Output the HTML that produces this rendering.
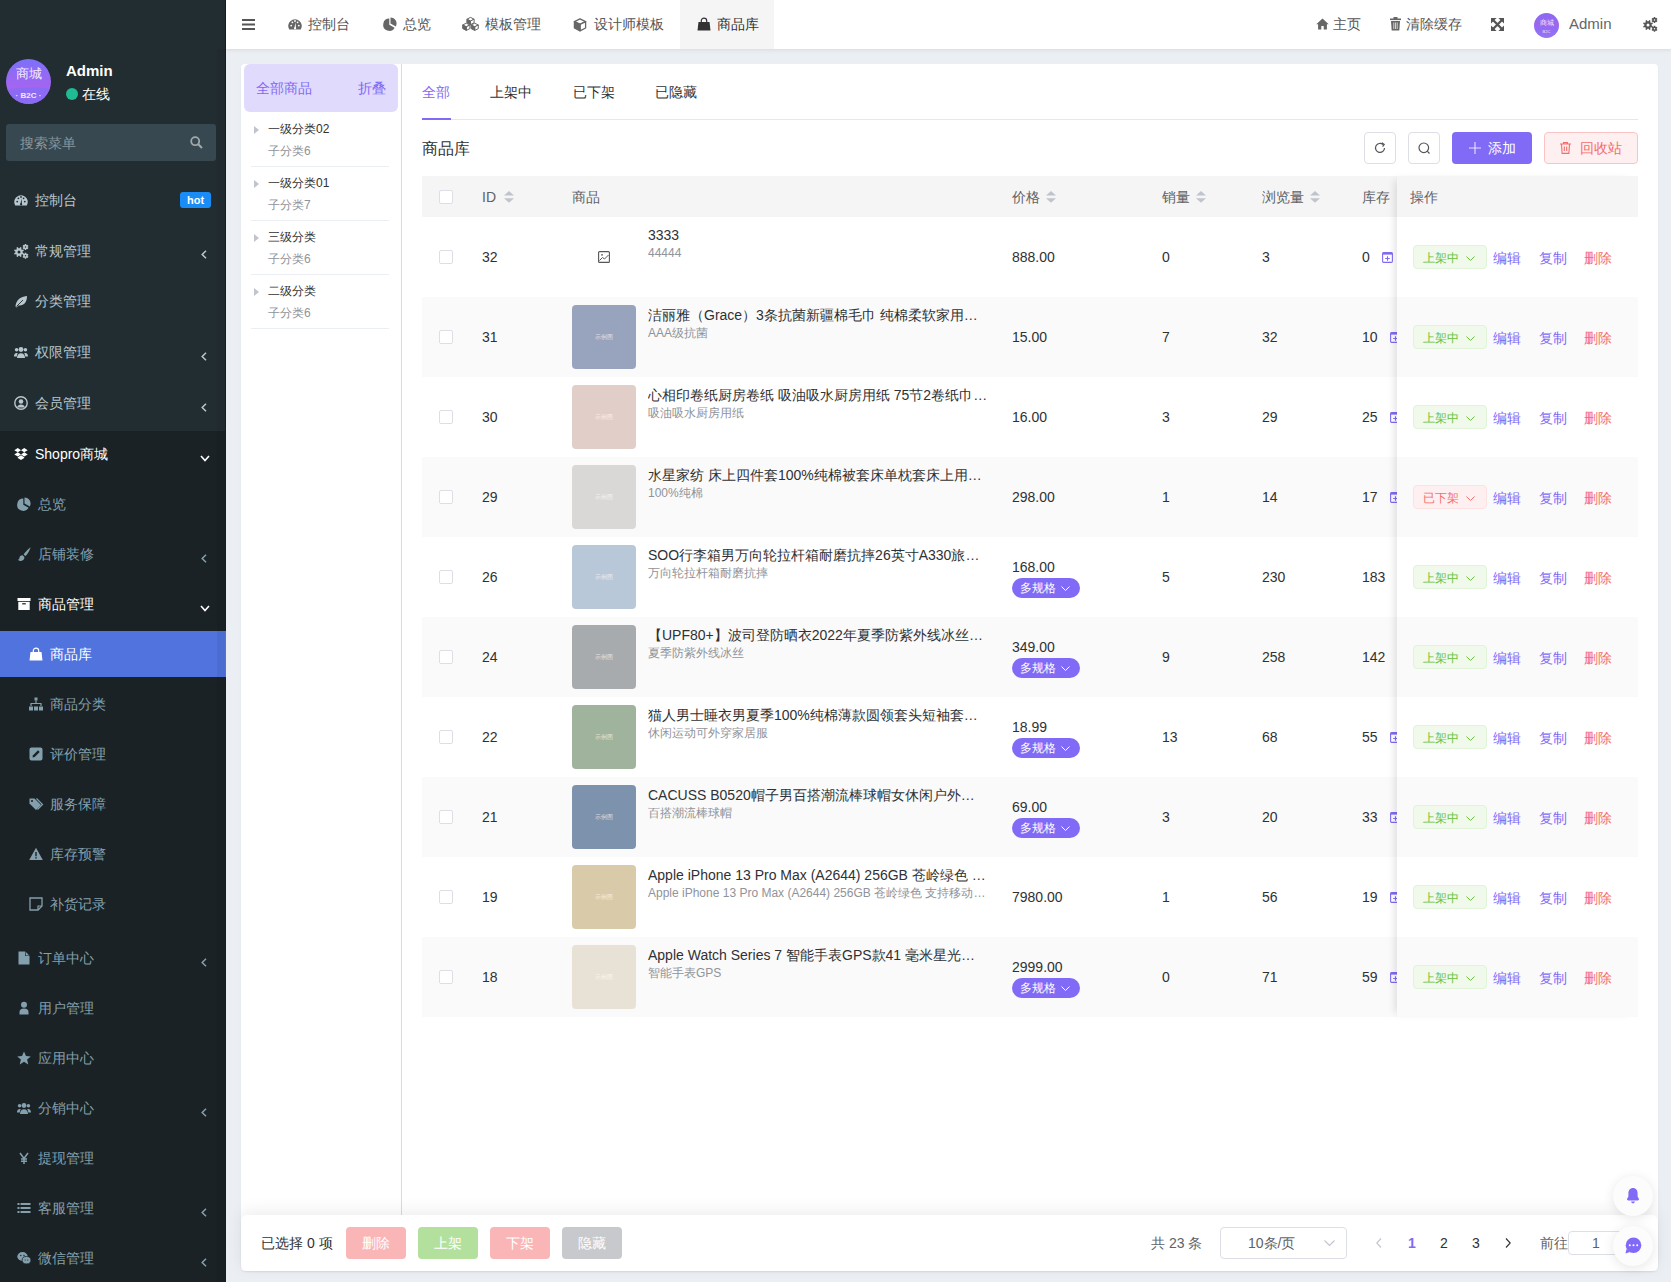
<!DOCTYPE html><html><head><meta charset="utf-8"><style>
*{box-sizing:border-box;margin:0;padding:0}
html,body{width:1671px;height:1282px;overflow:hidden}
body{background:#ebeef3;font-family:"Liberation Sans",sans-serif;position:relative;font-size:14px;color:#303133}
.a{position:absolute;white-space:nowrap}
svg.a{display:block;overflow:visible}
.ell{overflow:hidden;text-overflow:ellipsis}
</style></head><body>
<div class="a" style="left:0px;top:0px;width:226px;height:1282px;background:#222d32"></div>
<div class="a" style="left:0px;top:431px;width:226px;height:851px;background:#1a2226"></div>
<div class="a" style="left:217px;top:49px;width:8px;height:1233px;background:rgba(0,0,0,0.06)"></div>
<div class="a" style="left:225px;top:0px;width:1px;height:1282px;background:#161d21"></div>
<svg class="a" style="left:6px;top:59px" width="45" height="45" viewBox="0 0 45 45"><defs><linearGradient id="ag" x1="0" y1="0" x2="0" y2="1"><stop offset="0" stop-color="#7c70fa"/><stop offset="0.62" stop-color="#a465ef"/><stop offset="0.66" stop-color="#b062ee"/></linearGradient><clipPath id="ac"><circle cx="22.5" cy="22.5" r="22.5"/></clipPath></defs><g clip-path="url(#ac)"><rect width="45" height="45" fill="url(#ag)"/><path d="M0 30C12 28.5 30 27.5 45 29.5V45H0z" fill="#8c6bf4"/></g></svg>
<div class="a" style="left:6px;top:66px;width:45px;text-align:center;font-size:13px;line-height:16px;color:#f1eaff">商城</div>
<div class="a" style="left:6px;top:90.5px;width:45px;text-align:center;font-size:8px;line-height:9px;color:#f1eaff;font-weight:bold">·&nbsp;B2C&nbsp;·</div>
<div class="a" style="left:66px;top:60.5px;font-size:15px;line-height:20px;color:#ffffff;font-weight:bold;">Admin</div>
<div class="a" style="left:66px;top:88px;width:12px;height:12px;background:#1fbc93;border-radius:50%"></div>
<div class="a" style="left:82px;top:84.0px;font-size:14px;line-height:20px;color:#ffffff;font-weight:normal;">在线</div>
<div class="a" style="left:6px;top:124px;width:210px;height:37px;background:#374850;border-radius:3px"></div>
<div class="a" style="left:20px;top:132.5px;font-size:14px;line-height:20px;color:#8b959a;font-weight:normal;">搜索菜单</div>
<svg class="a" style="left:190px;top:136px;" width="13" height="13" viewBox="0 0 13 13"><circle cx="5.2" cy="5.2" r="4" fill="none" stroke="#a3a8ab" stroke-width="1.8"/><path d="M8.2 8.2 12 12" stroke="#a3a8ab" stroke-width="2"/></svg>
<div class="a" style="left:0px;top:631px;width:226px;height:46px;background:#5073dd"></div>
<div class="a" style="left:217px;top:631px;width:8px;height:46px;background:rgba(0,0,0,0.05)"></div>
<svg class="a" style="left:14px;top:192.5px;" width="14" height="14" viewBox="0 0 14 14"><path d="M1.2 12.6A6.8 6.8 0 1 1 12.8 12.6z" fill="#b8c7ce"/><circle cx="3.2" cy="8.6" r=".9" fill="#222d32"/><circle cx="4.4" cy="5.3" r=".9" fill="#222d32"/><circle cx="7" cy="4" r=".9" fill="#222d32"/><circle cx="9.6" cy="5.3" r=".9" fill="#222d32"/><circle cx="10.8" cy="8.6" r=".9" fill="#222d32"/><path d="M6.3 11.5 7.6 5.6 8 11.5z" fill="#222d32"/><circle cx="7.1" cy="11.3" r="1.1" fill="#222d32"/></svg>
<div class="a" style="left:35px;top:189.5px;font-size:14px;line-height:20px;color:#b8c7ce;font-weight:normal;">控制台</div>
<div class="a" style="left:180px;top:192.0px;width:31px;height:16px;background:#1a8cf6;border-radius:3px;color:#fff;font-size:11px;line-height:16px;text-align:center;font-weight:bold">hot</div>
<svg class="a" style="left:14px;top:243.5px;" width="14" height="14" viewBox="0 0 14 14"><path fill-rule="evenodd" fill="#b8c7ce" d="M8.70 8.00 L8.64 8.65 L9.88 9.11 L9.23 10.66 L8.04 10.12 L7.62 10.62 L7.12 11.04 L7.66 12.23 L6.11 12.88 L5.65 11.64 L5.00 11.70 L4.35 11.64 L3.89 12.88 L2.34 12.23 L2.88 11.04 L2.38 10.62 L1.96 10.12 L0.77 10.66 L0.12 9.11 L1.36 8.65 L1.30 8.00 L1.36 7.35 L0.12 6.89 L0.77 5.34 L1.96 5.88 L2.38 5.38 L2.88 4.96 L2.34 3.77 L3.89 3.12 L4.35 4.36 L5.00 4.30 L5.65 4.36 L6.11 3.12 L7.66 3.77 L7.12 4.96 L7.62 5.38 L8.04 5.88 L9.23 5.34 L9.88 6.89 L8.64 7.35Z M3.50 8.00 a1.5 1.5 0 1 0 3.00 0 a1.5 1.5 0 1 0 -3.00 0Z"/><path fill-rule="evenodd" fill="#b8c7ce" d="M13.80 3.00 L13.75 3.48 L14.49 3.83 L13.71 5.17 L13.04 4.71 L12.65 4.99 L12.21 5.19 L12.27 6.00 L10.73 6.00 L10.79 5.19 L10.35 4.99 L9.96 4.71 L9.29 5.17 L8.51 3.83 L9.25 3.48 L9.20 3.00 L9.25 2.52 L8.51 2.17 L9.29 0.83 L9.96 1.29 L10.35 1.01 L10.79 0.81 L10.73 -0.00 L12.27 -0.00 L12.21 0.81 L12.65 1.01 L13.04 1.29 L13.71 0.83 L14.49 2.17 L13.75 2.52Z M10.75 3.00 a0.75 0.75 0 1 0 1.50 0 a0.75 0.75 0 1 0 -1.50 0Z"/><path fill-rule="evenodd" fill="#b8c7ce" d="M13.80 11.80 L13.75 12.28 L14.49 12.63 L13.71 13.97 L13.04 13.51 L12.65 13.79 L12.21 13.99 L12.27 14.80 L10.73 14.80 L10.79 13.99 L10.35 13.79 L9.96 13.51 L9.29 13.97 L8.51 12.63 L9.25 12.28 L9.20 11.80 L9.25 11.32 L8.51 10.97 L9.29 9.63 L9.96 10.09 L10.35 9.81 L10.79 9.61 L10.73 8.80 L12.27 8.80 L12.21 9.61 L12.65 9.81 L13.04 10.09 L13.71 9.63 L14.49 10.97 L13.75 11.32Z M10.75 11.80 a0.75 0.75 0 1 0 1.50 0 a0.75 0.75 0 1 0 -1.50 0Z"/></svg>
<div class="a" style="left:35px;top:240.5px;font-size:14px;line-height:20px;color:#b8c7ce;font-weight:normal;">常规管理</div>
<svg class="a" style="left:201px;top:250.0px;" width="6" height="9" viewBox="0 0 6 9"><path d="M5 .8 1.2 4.5 5 8.2" fill="none" stroke="#b8c7ce" stroke-width="1.5"/></svg>
<svg class="a" style="left:14px;top:294px;" width="14" height="14" viewBox="0 0 14 14"><path d="M1.5 12.5C2 7 5 3 13 2c0 6-3 10-8.5 9.5L2.5 13.5z" fill="#b8c7ce"/><path d="M2.5 12.5 9 6" stroke="#222d32" stroke-width=".9"/></svg>
<div class="a" style="left:35px;top:291.0px;font-size:14px;line-height:20px;color:#b8c7ce;font-weight:normal;">分类管理</div>
<svg class="a" style="left:14px;top:345px;" width="14" height="14" viewBox="0 0 14 14"><circle cx="7" cy="4.5" r="2.4" fill="#b8c7ce"/><path d="M3 13c0-3 1.6-4.8 4-4.8s4 1.8 4 4.8z" fill="#b8c7ce"/><circle cx="2.6" cy="4.8" r="1.8" fill="#b8c7ce"/><circle cx="11.4" cy="4.8" r="1.8" fill="#b8c7ce"/><path d="M0 11.5c0-2.3 1-3.6 2.6-3.6 1 0 1.2.3 1.2.3-.7.9-1 2-1 3.3zM14 11.5c0-2.3-1-3.6-2.6-3.6-1 0-1.2.3-1.2.3.7.9 1 2 1 3.3z" fill="#b8c7ce"/></svg>
<div class="a" style="left:35px;top:342.0px;font-size:14px;line-height:20px;color:#b8c7ce;font-weight:normal;">权限管理</div>
<svg class="a" style="left:201px;top:351.5px;" width="6" height="9" viewBox="0 0 6 9"><path d="M5 .8 1.2 4.5 5 8.2" fill="none" stroke="#b8c7ce" stroke-width="1.5"/></svg>
<svg class="a" style="left:14px;top:396px;" width="14" height="14" viewBox="0 0 14 14"><circle cx="7" cy="7" r="6.2" fill="none" stroke="#b8c7ce" stroke-width="1.4"/><circle cx="7" cy="5.5" r="2.3" fill="#b8c7ce"/><path d="M3 11.5c.6-2 2-3 4-3s3.4 1 4 3" fill="#b8c7ce"/></svg>
<div class="a" style="left:35px;top:393.0px;font-size:14px;line-height:20px;color:#b8c7ce;font-weight:normal;">会员管理</div>
<svg class="a" style="left:201px;top:402.5px;" width="6" height="9" viewBox="0 0 6 9"><path d="M5 .8 1.2 4.5 5 8.2" fill="none" stroke="#b8c7ce" stroke-width="1.5"/></svg>
<svg class="a" style="left:14px;top:447px;" width="14" height="14" viewBox="0 0 14 14"><path d="M.3 3.2 3.8 1 7 3.2 3.8 5.3zM7 3.2 10.2 1 13.7 3.2 10.2 5.3zM.3 7.4 3.8 5.3 7 7.4 3.8 9.5zM7 7.4 10.2 5.3 13.7 7.4 10.2 9.5zM3.8 10.3 7 8.3 10.2 10.3V11.1L7 13.1 3.8 11.1z" fill="#ffffff"/></svg>
<div class="a" style="left:35px;top:444.0px;font-size:14px;line-height:20px;color:#ffffff;font-weight:normal;">Shopro商城</div>
<svg class="a" style="left:200px;top:454.5px;" width="10" height="7" viewBox="0 0 10 7"><path d="M1 1 5.0 5.5 9 1" fill="none" stroke="#ffffff" stroke-width="1.6"/></svg>
<svg class="a" style="left:17px;top:497px;" width="14" height="14" viewBox="0 0 14 14"><path d="M6.3 7.7V1.6A6.1 6.1 0 1 0 11.6 10.7z" fill="#84a0ad"/><path d="M7.5 6.6V.5A6.1 6.1 0 0 1 12.8 9.6z" fill="#84a0ad"/></svg>
<div class="a" style="left:38px;top:494.0px;font-size:14px;line-height:20px;color:#84a0ad;font-weight:normal;">总览</div>
<svg class="a" style="left:17px;top:547px;" width="14" height="14" viewBox="0 0 14 14"><path d="M13.6.4C12.2.9 8 5.2 6.6 7.4l1.6 1.6C10.4 7.6 13.2 2 13.6.4z" fill="#84a0ad"/><path d="M5.6 8.2C3.6 8.2 2.4 9.6 2.4 11c0 1-.5 1.6-1.6 1.8 1 1 2.2 1.2 3 1.2 2.4 0 3.8-1.6 3.6-3.9z" fill="#84a0ad"/></svg>
<div class="a" style="left:38px;top:544.0px;font-size:14px;line-height:20px;color:#84a0ad;font-weight:normal;">店铺装修</div>
<svg class="a" style="left:201px;top:553.5px;" width="6" height="9" viewBox="0 0 6 9"><path d="M5 .8 1.2 4.5 5 8.2" fill="none" stroke="#84a0ad" stroke-width="1.5"/></svg>
<svg class="a" style="left:17px;top:597px;" width="14" height="14" viewBox="0 0 14 14"><rect x=".5" y="1" width="13" height="3" fill="#ffffff"/><rect x="1.3" y="4.8" width="11.4" height="8.2" fill="#ffffff"/><rect x="5.2" y="6.2" width="3.6" height="1.2" fill="#1a2226"/></svg>
<div class="a" style="left:38px;top:594.0px;font-size:14px;line-height:20px;color:#ffffff;font-weight:normal;">商品管理</div>
<svg class="a" style="left:200px;top:604.5px;" width="10" height="7" viewBox="0 0 10 7"><path d="M1 1 5.0 5.5 9 1" fill="none" stroke="#ffffff" stroke-width="1.6"/></svg>
<svg class="a" style="left:29px;top:647px;" width="14" height="14" viewBox="0 0 14 14"><path d="M4.3 5V3.8a2.7 2.7 0 0 1 5.4 0V5" fill="none" stroke="#ffffff" stroke-width="1.2"/><path d="M1.5 5h11l1 8.5H.5z" fill="#ffffff"/></svg>
<div class="a" style="left:50px;top:644.0px;font-size:14px;line-height:20px;color:#ffffff;font-weight:normal;">商品库</div>
<svg class="a" style="left:29px;top:697px;" width="14" height="14" viewBox="0 0 14 14"><rect x="5.5" y=".5" width="3" height="3" fill="#84a0ad"/><path d="M7 3.5v3M2 9V6.5h10V9" stroke="#84a0ad" stroke-width="1.2" fill="none"/><rect x="0" y="9.5" width="4" height="4" fill="#84a0ad"/><rect x="5" y="9.5" width="4" height="4" fill="#84a0ad"/><rect x="10" y="9.5" width="4" height="4" fill="#84a0ad"/></svg>
<div class="a" style="left:50px;top:694.0px;font-size:14px;line-height:20px;color:#84a0ad;font-weight:normal;">商品分类</div>
<svg class="a" style="left:29px;top:747px;" width="14" height="14" viewBox="0 0 14 14"><rect x=".5" y=".5" width="13" height="13" rx="2" fill="#84a0ad"/><path d="M3.5 10.5 4 8.3 9 3.3l1.7 1.7-5 5z" fill="#1a2226"/></svg>
<div class="a" style="left:50px;top:744.0px;font-size:14px;line-height:20px;color:#84a0ad;font-weight:normal;">评价管理</div>
<svg class="a" style="left:29px;top:797px;" width="14" height="14" viewBox="0 0 14 14"><path d="M.5 1.5v5l6.5 6.5 5-5L5.5 1.5z" fill="#84a0ad"/><circle cx="3" cy="4" r="1" fill="#1a2226"/><path d="M7.5 1.5 13.5 7.5l-5 5" fill="none" stroke="#84a0ad" stroke-width="1.2"/></svg>
<div class="a" style="left:50px;top:794.0px;font-size:14px;line-height:20px;color:#84a0ad;font-weight:normal;">服务保障</div>
<svg class="a" style="left:29px;top:847px;" width="14" height="14" viewBox="0 0 14 14"><path d="M7 .8 13.8 13H.2z" fill="#84a0ad"/><rect x="6.3" y="5" width="1.4" height="4.3" fill="#1a2226"/><rect x="6.3" y="10.2" width="1.4" height="1.4" fill="#1a2226"/></svg>
<div class="a" style="left:50px;top:844.0px;font-size:14px;line-height:20px;color:#84a0ad;font-weight:normal;">库存预警</div>
<svg class="a" style="left:29px;top:897px;" width="14" height="14" viewBox="0 0 14 14"><path d="M1 1h12v8l-4 4H1z" fill="none" stroke="#84a0ad" stroke-width="1.3"/><path d="M13 9H9v4" fill="none" stroke="#84a0ad" stroke-width="1.2"/></svg>
<div class="a" style="left:50px;top:894.0px;font-size:14px;line-height:20px;color:#84a0ad;font-weight:normal;">补货记录</div>
<svg class="a" style="left:17px;top:951px;" width="14" height="14" viewBox="0 0 14 14"><path d="M1.5 .5h6.5l4.5 4.5v8.5h-11z" fill="#84a0ad"/><path d="M8 .5V5h4.5" fill="#1a2226"/><path d="M8.6 .8v3.6h3.6z" fill="#84a0ad"/></svg>
<div class="a" style="left:38px;top:948.0px;font-size:14px;line-height:20px;color:#84a0ad;font-weight:normal;">订单中心</div>
<svg class="a" style="left:201px;top:957.5px;" width="6" height="9" viewBox="0 0 6 9"><path d="M5 .8 1.2 4.5 5 8.2" fill="none" stroke="#84a0ad" stroke-width="1.5"/></svg>
<svg class="a" style="left:17px;top:1001px;" width="14" height="14" viewBox="0 0 14 14"><circle cx="7" cy="3.8" r="3" fill="#84a0ad"/><path d="M2.5 13.5V11C2.5 8.6 4 7.4 7 7.4S11.5 8.6 11.5 11V13.5z" fill="#84a0ad"/></svg>
<div class="a" style="left:38px;top:998.0px;font-size:14px;line-height:20px;color:#84a0ad;font-weight:normal;">用户管理</div>
<svg class="a" style="left:17px;top:1051px;" width="14" height="14" viewBox="0 0 14 14"><path d="M7 .5 9 5l4.8.4-3.7 3.2 1.2 4.8L7 10.8l-4.3 2.6 1.2-4.8L.2 5.4 5 5z" fill="#84a0ad"/></svg>
<div class="a" style="left:38px;top:1048.0px;font-size:14px;line-height:20px;color:#84a0ad;font-weight:normal;">应用中心</div>
<svg class="a" style="left:17px;top:1101px;" width="14" height="14" viewBox="0 0 14 14"><circle cx="7" cy="4.5" r="2.4" fill="#84a0ad"/><path d="M3 13c0-3 1.6-4.8 4-4.8s4 1.8 4 4.8z" fill="#84a0ad"/><circle cx="2.6" cy="4.8" r="1.8" fill="#84a0ad"/><circle cx="11.4" cy="4.8" r="1.8" fill="#84a0ad"/><path d="M0 11.5c0-2.3 1-3.6 2.6-3.6 1 0 1.2.3 1.2.3-.7.9-1 2-1 3.3zM14 11.5c0-2.3-1-3.6-2.6-3.6-1 0-1.2.3-1.2.3.7.9 1 2 1 3.3z" fill="#84a0ad"/></svg>
<div class="a" style="left:38px;top:1098.0px;font-size:14px;line-height:20px;color:#84a0ad;font-weight:normal;">分销中心</div>
<svg class="a" style="left:201px;top:1107.5px;" width="6" height="9" viewBox="0 0 6 9"><path d="M5 .8 1.2 4.5 5 8.2" fill="none" stroke="#84a0ad" stroke-width="1.5"/></svg>
<svg class="a" style="left:17px;top:1151px;" width="14" height="14" viewBox="0 0 14 14"><path d="M3 2 7 7.5 11 2M7 7.5V13M4 8h6M4 10.3h6" stroke="#84a0ad" stroke-width="1.5" fill="none"/></svg>
<div class="a" style="left:38px;top:1148.0px;font-size:14px;line-height:20px;color:#84a0ad;font-weight:normal;">提现管理</div>
<svg class="a" style="left:17px;top:1201px;" width="14" height="14" viewBox="0 0 14 14"><rect x=".5" y="2" width="2" height="2" fill="#84a0ad"/><rect x=".5" y="6" width="2" height="2" fill="#84a0ad"/><rect x=".5" y="10" width="2" height="2" fill="#84a0ad"/><rect x="3.5" y="2" width="10" height="2" fill="#84a0ad"/><rect x="3.5" y="6" width="10" height="2" fill="#84a0ad"/><rect x="3.5" y="10" width="10" height="2" fill="#84a0ad"/></svg>
<div class="a" style="left:38px;top:1198.0px;font-size:14px;line-height:20px;color:#84a0ad;font-weight:normal;">客服管理</div>
<svg class="a" style="left:201px;top:1207.5px;" width="6" height="9" viewBox="0 0 6 9"><path d="M5 .8 1.2 4.5 5 8.2" fill="none" stroke="#84a0ad" stroke-width="1.5"/></svg>
<svg class="a" style="left:17px;top:1251px;" width="14" height="14" viewBox="0 0 14 14"><ellipse cx="5.5" cy="5.5" rx="5.2" ry="4.4" fill="#84a0ad"/><ellipse cx="9.5" cy="9.2" rx="4.4" ry="3.7" fill="#84a0ad" stroke="#1a2226" stroke-width=".8"/><circle cx="3.8" cy="4.5" r=".7" fill="#1a2226"/><circle cx="7" cy="4.5" r=".7" fill="#1a2226"/><circle cx="8.2" cy="9" r=".6" fill="#1a2226"/><circle cx="10.8" cy="9" r=".6" fill="#1a2226"/></svg>
<div class="a" style="left:38px;top:1248.0px;font-size:14px;line-height:20px;color:#84a0ad;font-weight:normal;">微信管理</div>
<svg class="a" style="left:201px;top:1257.5px;" width="6" height="9" viewBox="0 0 6 9"><path d="M5 .8 1.2 4.5 5 8.2" fill="none" stroke="#84a0ad" stroke-width="1.5"/></svg>
<div class="a" style="left:226px;top:0px;width:1445px;height:49px;background:#fff;box-shadow:0 1px 4px rgba(0,0,0,0.09)"></div>
<div class="a" style="left:680px;top:0px;width:94px;height:49px;background:#f5f5f5"></div>
<svg class="a" style="left:242px;top:19px;" width="13" height="11" viewBox="0 0 13 11"><rect y="0" width="13" height="2" fill="#555"/><rect y="4.5" width="13" height="2" fill="#555"/><rect y="9" width="13" height="2" fill="#555"/></svg>
<svg class="a" style="left:288px;top:17px;" width="14" height="14" viewBox="0 0 14 14"><path d="M1.2 12.6A6.8 6.8 0 1 1 12.8 12.6z" fill="#666"/><circle cx="3.2" cy="8.6" r=".9" fill="#fff"/><circle cx="4.4" cy="5.3" r=".9" fill="#fff"/><circle cx="7" cy="4" r=".9" fill="#fff"/><circle cx="9.6" cy="5.3" r=".9" fill="#fff"/><circle cx="10.8" cy="8.6" r=".9" fill="#fff"/><path d="M6.3 11.5 7.6 5.6 8 11.5z" fill="#fff"/><circle cx="7.1" cy="11.3" r="1.1" fill="#fff"/></svg>
<div class="a" style="left:308px;top:14.0px;font-size:14px;line-height:20px;color:#555;font-weight:normal;">控制台</div>
<svg class="a" style="left:383px;top:17px;" width="14" height="14" viewBox="0 0 14 14"><path d="M6.3 7.7V1.6A6.1 6.1 0 1 0 11.6 10.7z" fill="#666"/><path d="M7.5 6.6V.5A6.1 6.1 0 0 1 12.8 9.6z" fill="#666"/></svg>
<div class="a" style="left:403px;top:14.0px;font-size:14px;line-height:20px;color:#555;font-weight:normal;">总览</div>
<svg class="a" style="left:462px;top:17px;" width="17" height="14" viewBox="0 0 17 14"><path d="M8.50 0.40 L12.10 2.20 L8.50 4.00 L4.90 2.20Z" fill="#fff" stroke="#666" stroke-width="1.0" stroke-linejoin="round"/><path d="M8.50 4.00 L12.10 2.20 L12.10 5.80 L8.50 7.60Z" fill="#fff" stroke="#666" stroke-width="1.0" stroke-linejoin="round"/><path d="M4.90 2.20 L8.50 4.00 L8.50 7.60 L4.90 5.80Z" fill="#666" stroke="#666" stroke-width="1.0" stroke-linejoin="round"/><path d="M4.30 6.20 L7.90 8.00 L4.30 9.80 L0.70 8.00Z" fill="#fff" stroke="#666" stroke-width="1.0" stroke-linejoin="round"/><path d="M4.30 9.80 L7.90 8.00 L7.90 11.60 L4.30 13.40Z" fill="#fff" stroke="#666" stroke-width="1.0" stroke-linejoin="round"/><path d="M0.70 8.00 L4.30 9.80 L4.30 13.40 L0.70 11.60Z" fill="#666" stroke="#666" stroke-width="1.0" stroke-linejoin="round"/><path d="M12.70 6.20 L16.30 8.00 L12.70 9.80 L9.10 8.00Z" fill="#fff" stroke="#666" stroke-width="1.0" stroke-linejoin="round"/><path d="M12.70 9.80 L16.30 8.00 L16.30 11.60 L12.70 13.40Z" fill="#fff" stroke="#666" stroke-width="1.0" stroke-linejoin="round"/><path d="M9.10 8.00 L12.70 9.80 L12.70 13.40 L9.10 11.60Z" fill="#666" stroke="#666" stroke-width="1.0" stroke-linejoin="round"/></svg>
<div class="a" style="left:485px;top:14.0px;font-size:14px;line-height:20px;color:#555;font-weight:normal;">模板管理</div>
<svg class="a" style="left:573px;top:18px;" width="14" height="14" viewBox="0 0 14 14"><path d="M7.00 0.80 L12.60 3.60 L7.00 6.40 L1.40 3.60Z" fill="#fff" stroke="#666" stroke-width="1.3" stroke-linejoin="round"/><path d="M7.00 6.40 L12.60 3.60 L12.60 10.00 L7.00 12.80Z" fill="#fff" stroke="#666" stroke-width="1.3" stroke-linejoin="round"/><path d="M1.40 3.60 L7.00 6.40 L7.00 12.80 L1.40 10.00Z" fill="#666" stroke="#666" stroke-width="1.3" stroke-linejoin="round"/></svg>
<div class="a" style="left:594px;top:14.0px;font-size:14px;line-height:20px;color:#555;font-weight:normal;">设计师模板</div>
<svg class="a" style="left:697px;top:17px;" width="14" height="14" viewBox="0 0 14 14"><path d="M4.3 5V3.8a2.7 2.7 0 0 1 5.4 0V5" fill="none" stroke="#333" stroke-width="1.2"/><path d="M1.5 5h11l1 8.5H.5z" fill="#333"/></svg>
<div class="a" style="left:717px;top:14.0px;font-size:14px;line-height:20px;color:#333;font-weight:normal;">商品库</div>
<svg class="a" style="left:1316px;top:18px;" width="13" height="12" viewBox="0 0 13 12"><path d="M6.5 .5 .3 6.2h1.8V11.5h3.2V8h2.4v3.5h3.2V6.2h1.8z" fill="#666"/></svg>
<div class="a" style="left:1333px;top:14.0px;font-size:14px;line-height:20px;color:#555;font-weight:normal;">主页</div>
<svg class="a" style="left:1390px;top:17px;" width="11" height="14" viewBox="0 0 11 14"><rect x="0" y="1.5" width="11" height="1.6" fill="#666"/><rect x="3.5" y="0" width="4" height="2" fill="#666"/><path d="M1 4h9l-.7 9.5H1.7z" fill="#666"/><path d="M3.8 5.5v6.5M5.5 5.5v6.5M7.2 5.5v6.5" stroke="#fff" stroke-width=".7"/></svg>
<div class="a" style="left:1406px;top:14.0px;font-size:14px;line-height:20px;color:#555;font-weight:normal;">清除缓存</div>
<svg class="a" style="left:1491px;top:18px;" width="13" height="13" viewBox="0 0 13 13"><path d="M0 0H5.6L0 5.6zM13 0V5.6L7.4 0zM0 13V7.4L5.6 13zM13 13H7.4L13 7.4z" fill="#555"/><path d="M1.8 1.8 11.2 11.2M11.2 1.8 1.8 11.2" stroke="#555" stroke-width="2.3"/></svg>
<div class="a" style="left:1534px;top:13px;width:25px;height:25px;border-radius:50%;background:linear-gradient(180deg,#8a6af2 0%,#a066ee 60%,#8f6cf3 62%,#9676f4 100%);overflow:hidden"><div class="a" style="left:0;top:5px;width:25px;text-align:center;font-size:7px;line-height:9px;color:#efe6ff">商城</div><div class="a" style="left:0;top:16px;width:25px;text-align:center;font-size:4px;line-height:5px;color:#efe6ff">B2C</div></div>
<div class="a" style="left:1569px;top:13.5px;font-size:15px;line-height:20px;color:#666;font-weight:normal;">Admin</div>
<svg class="a" style="left:1642px;top:17px;" width="16" height="14" viewBox="0 0 14 14"><path fill-rule="evenodd" fill="#555" d="M8.70 8.00 L8.64 8.65 L9.88 9.11 L9.23 10.66 L8.04 10.12 L7.62 10.62 L7.12 11.04 L7.66 12.23 L6.11 12.88 L5.65 11.64 L5.00 11.70 L4.35 11.64 L3.89 12.88 L2.34 12.23 L2.88 11.04 L2.38 10.62 L1.96 10.12 L0.77 10.66 L0.12 9.11 L1.36 8.65 L1.30 8.00 L1.36 7.35 L0.12 6.89 L0.77 5.34 L1.96 5.88 L2.38 5.38 L2.88 4.96 L2.34 3.77 L3.89 3.12 L4.35 4.36 L5.00 4.30 L5.65 4.36 L6.11 3.12 L7.66 3.77 L7.12 4.96 L7.62 5.38 L8.04 5.88 L9.23 5.34 L9.88 6.89 L8.64 7.35Z M3.50 8.00 a1.5 1.5 0 1 0 3.00 0 a1.5 1.5 0 1 0 -3.00 0Z"/><path fill-rule="evenodd" fill="#555" d="M13.80 3.00 L13.75 3.48 L14.49 3.83 L13.71 5.17 L13.04 4.71 L12.65 4.99 L12.21 5.19 L12.27 6.00 L10.73 6.00 L10.79 5.19 L10.35 4.99 L9.96 4.71 L9.29 5.17 L8.51 3.83 L9.25 3.48 L9.20 3.00 L9.25 2.52 L8.51 2.17 L9.29 0.83 L9.96 1.29 L10.35 1.01 L10.79 0.81 L10.73 -0.00 L12.27 -0.00 L12.21 0.81 L12.65 1.01 L13.04 1.29 L13.71 0.83 L14.49 2.17 L13.75 2.52Z M10.75 3.00 a0.75 0.75 0 1 0 1.50 0 a0.75 0.75 0 1 0 -1.50 0Z"/><path fill-rule="evenodd" fill="#555" d="M13.80 11.80 L13.75 12.28 L14.49 12.63 L13.71 13.97 L13.04 13.51 L12.65 13.79 L12.21 13.99 L12.27 14.80 L10.73 14.80 L10.79 13.99 L10.35 13.79 L9.96 13.51 L9.29 13.97 L8.51 12.63 L9.25 12.28 L9.20 11.80 L9.25 11.32 L8.51 10.97 L9.29 9.63 L9.96 10.09 L10.35 9.81 L10.79 9.61 L10.73 8.80 L12.27 8.80 L12.21 9.61 L12.65 9.81 L13.04 10.09 L13.71 9.63 L14.49 10.97 L13.75 11.32Z M10.75 11.80 a0.75 0.75 0 1 0 1.50 0 a0.75 0.75 0 1 0 -1.50 0Z"/></svg>
<div class="a" style="left:241px;top:64px;width:1417px;height:1207px;background:#fff;border-radius:4px;box-shadow:0 1px 3px rgba(0,0,0,0.04)"></div>
<div class="a" style="left:244px;top:64px;width:154px;height:48px;background:#e0dafc;border-radius:6px"></div>
<div class="a" style="left:256px;top:78.0px;font-size:14px;line-height:20px;color:#806af6;font-weight:normal;">全部商品</div>
<div class="a" style="left:358px;top:78.0px;font-size:14px;line-height:20px;color:#806af6;font-weight:normal;">折叠</div>
<div class="a" style="left:401px;top:64px;width:1px;height:1151px;background:#dadada"></div>
<svg class="a" style="left:254px;top:126px;" width="5" height="8" viewBox="0 0 5 8"><path d="M0 0 5 4 0 8z" fill="#c0c4cc"/></svg>
<div class="a" style="left:268px;top:118.5px;font-size:12px;line-height:20px;color:#303133;font-weight:normal;">一级分类02</div>
<div class="a" style="left:268px;top:141.0px;font-size:12px;line-height:20px;color:#909399;font-weight:normal;">子分类6</div>
<div class="a" style="left:251px;top:165.5px;width:138px;height:1px;background:#ebeef5"></div>
<svg class="a" style="left:254px;top:180px;" width="5" height="8" viewBox="0 0 5 8"><path d="M0 0 5 4 0 8z" fill="#c0c4cc"/></svg>
<div class="a" style="left:268px;top:172.5px;font-size:12px;line-height:20px;color:#303133;font-weight:normal;">一级分类01</div>
<div class="a" style="left:268px;top:195.0px;font-size:12px;line-height:20px;color:#909399;font-weight:normal;">子分类7</div>
<div class="a" style="left:251px;top:219.5px;width:138px;height:1px;background:#ebeef5"></div>
<svg class="a" style="left:254px;top:234px;" width="5" height="8" viewBox="0 0 5 8"><path d="M0 0 5 4 0 8z" fill="#c0c4cc"/></svg>
<div class="a" style="left:268px;top:226.5px;font-size:12px;line-height:20px;color:#303133;font-weight:normal;">三级分类</div>
<div class="a" style="left:268px;top:249.0px;font-size:12px;line-height:20px;color:#909399;font-weight:normal;">子分类6</div>
<div class="a" style="left:251px;top:273.5px;width:138px;height:1px;background:#ebeef5"></div>
<svg class="a" style="left:254px;top:288px;" width="5" height="8" viewBox="0 0 5 8"><path d="M0 0 5 4 0 8z" fill="#c0c4cc"/></svg>
<div class="a" style="left:268px;top:280.5px;font-size:12px;line-height:20px;color:#303133;font-weight:normal;">二级分类</div>
<div class="a" style="left:268px;top:303.0px;font-size:12px;line-height:20px;color:#909399;font-weight:normal;">子分类6</div>
<div class="a" style="left:251px;top:327.5px;width:138px;height:1px;background:#ebeef5"></div>
<div class="a" style="left:422px;top:82.0px;font-size:14px;line-height:20px;color:#806af6;font-weight:normal;">全部</div>
<div class="a" style="left:490px;top:82.0px;font-size:14px;line-height:20px;color:#303133;font-weight:normal;">上架中</div>
<div class="a" style="left:572.5px;top:82.0px;font-size:14px;line-height:20px;color:#303133;font-weight:normal;">已下架</div>
<div class="a" style="left:654.5px;top:82.0px;font-size:14px;line-height:20px;color:#303133;font-weight:normal;">已隐藏</div>
<div class="a" style="left:422px;top:119px;width:1216px;height:1px;background:#e4e7ed"></div>
<div class="a" style="left:422px;top:118px;width:28.5px;height:2px;background:#806af6"></div>
<div class="a" style="left:422px;top:139.0px;font-size:16px;line-height:20px;color:#303133;font-weight:normal;">商品库</div>
<div class="a" style="left:1364px;top:132px;width:32px;height:32px;border:1px solid #dcdfe6;border-radius:4px;background:#fff"></div>
<svg class="a" style="left:1374px;top:142px;" width="12" height="12" viewBox="0 0 12 12"><path d="M10.5 6A4.5 4.5 0 1 1 9 2.6" fill="none" stroke="#555" stroke-width="1.2"/><path d="M7.8 .8 10.2 2.4 8.6 4.6" fill="none" stroke="#555" stroke-width="1.2"/></svg>
<div class="a" style="left:1408px;top:132px;width:32px;height:32px;border:1px solid #dcdfe6;border-radius:4px;background:#fff"></div>
<svg class="a" style="left:1418px;top:142px;" width="12" height="12" viewBox="0 0 12 12"><circle cx="5.8" cy="5.8" r="4.8" fill="none" stroke="#555" stroke-width="1.2"/><path d="M9.2 9.2 11.5 11.5" stroke="#555" stroke-width="1.2"/></svg>
<div class="a" style="left:1452px;top:132px;width:80px;height:32px;background:#806af6;border-radius:4px"></div>
<svg class="a" style="left:1469px;top:142px;" width="12" height="12" viewBox="0 0 12 12"><path d="M6 0v12M0 6h12" stroke="#e8e3ff" stroke-width="1.1"/></svg>
<div class="a" style="left:1488px;top:138.0px;font-size:14px;line-height:20px;color:#fff;font-weight:normal;">添加</div>
<div class="a" style="left:1544px;top:132px;width:94px;height:32px;background:#fef0f0;border:1px solid #fbc4c4;border-radius:4px"></div>
<svg class="a" style="left:1560px;top:142px;" width="11" height="12" viewBox="0 0 11 12"><path d="M0 2h11M3.5 2V.6h4V2M1.5 2l.6 9.4h6.8L9.5 2M4.3 4.5v4.5M6.7 4.5v4.5" fill="none" stroke="#f56c6c" stroke-width="1.1"/></svg>
<div class="a" style="left:1580px;top:138.0px;font-size:14px;line-height:20px;color:#f56c6c;font-weight:normal;">回收站</div>
<div class="a" style="left:422px;top:176px;width:1216px;height:41px;background:#f5f5f5"></div>
<div class="a" style="left:439px;top:189.5px;width:14px;height:14px;border:1px solid #dcdfe6;border-radius:2px;background:#fff"></div>
<div class="a" style="left:482px;top:186.5px;font-size:14px;line-height:20px;color:#606266;font-weight:normal;">ID</div>
<svg class="a" style="left:504px;top:191.0px;" width="10" height="12" viewBox="0 0 10 12"><path d="M5 0 10 4.6H0z M0 7.2h10L5 11.8z" fill="#c0c4cc"/></svg>
<div class="a" style="left:572px;top:186.5px;font-size:14px;line-height:20px;color:#606266;font-weight:normal;">商品</div>
<div class="a" style="left:1012px;top:186.5px;font-size:14px;line-height:20px;color:#606266;font-weight:normal;">价格</div>
<svg class="a" style="left:1046px;top:191.0px;" width="10" height="12" viewBox="0 0 10 12"><path d="M5 0 10 4.6H0z M0 7.2h10L5 11.8z" fill="#c0c4cc"/></svg>
<div class="a" style="left:1162px;top:186.5px;font-size:14px;line-height:20px;color:#606266;font-weight:normal;">销量</div>
<svg class="a" style="left:1196px;top:191.0px;" width="10" height="12" viewBox="0 0 10 12"><path d="M5 0 10 4.6H0z M0 7.2h10L5 11.8z" fill="#c0c4cc"/></svg>
<div class="a" style="left:1262px;top:186.5px;font-size:14px;line-height:20px;color:#606266;font-weight:normal;">浏览量</div>
<svg class="a" style="left:1310px;top:191.0px;" width="10" height="12" viewBox="0 0 10 12"><path d="M5 0 10 4.6H0z M0 7.2h10L5 11.8z" fill="#c0c4cc"/></svg>
<div class="a" style="left:1362px;top:186.5px;font-size:14px;line-height:20px;color:#606266;font-weight:normal;">库存</div>
<div class="a" style="left:422px;top:217px;width:1216px;height:80px;background:#ffffff"></div>
<div class="a" style="left:439px;top:250px;width:14px;height:14px;border:1px solid #dcdfe6;border-radius:2px;background:#fff"></div>
<div class="a" style="left:482px;top:247.0px;font-size:14px;line-height:20px;color:#303133;font-weight:normal;">32</div>
<svg class="a" style="left:598px;top:251px;" width="12" height="12" viewBox="0 0 12 12"><rect x=".6" y=".6" width="10.8" height="10.8" rx="1" fill="none" stroke="#555" stroke-width="1.1"/><circle cx="4" cy="3.8" r=".9" fill="#555"/><path d="M1.5 9.5 4.5 6.5 6.5 8 10.5 4" fill="none" stroke="#555" stroke-width="1"/></svg>
<div class="a ell" style="left:648px;top:224.5px;width:340px;font-size:14px;line-height:20px;color:#303133">3333</div>
<div class="a ell" style="left:648px;top:245px;width:340px;font-size:12px;line-height:16px;color:#909399">44444</div>
<div class="a" style="left:1012px;top:247.0px;font-size:14px;line-height:20px;color:#303133;font-weight:normal;">888.00</div>
<div class="a" style="left:1162px;top:247.0px;font-size:14px;line-height:20px;color:#303133;font-weight:normal;">0</div>
<div class="a" style="left:1262px;top:247.0px;font-size:14px;line-height:20px;color:#303133;font-weight:normal;">3</div>
<div class="a" style="left:1362px;top:247.0px;font-size:14px;line-height:20px;color:#303133;font-weight:normal;">0</div>
<svg class="a" style="left:1382px;top:251.5px;" width="11" height="11" viewBox="0 0 11 11"><rect x=".6" y=".6" width="9.8" height="9.8" rx="1.2" fill="none" stroke="#806af6" stroke-width="1.1"/><rect x=".6" y=".6" width="9.8" height="2" fill="#806af6"/><path d="M5.5 4.2v4.6M3.2 6.5h4.6" stroke="#806af6" stroke-width="1.1"/></svg>
<div class="a" style="left:422px;top:297px;width:1216px;height:80px;background:#fafafa"></div>
<div class="a" style="left:439px;top:330px;width:14px;height:14px;border:1px solid #dcdfe6;border-radius:2px;background:#fff"></div>
<div class="a" style="left:482px;top:327.0px;font-size:14px;line-height:20px;color:#303133;font-weight:normal;">31</div>
<div class="a" style="left:572px;top:305px;width:64px;height:64px;border-radius:4px;background:#98a4be"><div class="a" style="left:0;top:27px;width:64px;text-align:center;font-size:6px;line-height:10px;color:rgba(255,255,255,0.7)">示例图</div></div>
<div class="a ell" style="left:648px;top:304.5px;width:340px;font-size:14px;line-height:20px;color:#303133">洁丽雅（Grace）3条抗菌新疆棉毛巾 纯棉柔软家用吸水面巾</div>
<div class="a ell" style="left:648px;top:325px;width:340px;font-size:12px;line-height:16px;color:#909399">AAA级抗菌</div>
<div class="a" style="left:1012px;top:327.0px;font-size:14px;line-height:20px;color:#303133;font-weight:normal;">15.00</div>
<div class="a" style="left:1162px;top:327.0px;font-size:14px;line-height:20px;color:#303133;font-weight:normal;">7</div>
<div class="a" style="left:1262px;top:327.0px;font-size:14px;line-height:20px;color:#303133;font-weight:normal;">32</div>
<div class="a" style="left:1362px;top:327.0px;font-size:14px;line-height:20px;color:#303133;font-weight:normal;">10</div>
<svg class="a" style="left:1390px;top:331.5px;" width="11" height="11" viewBox="0 0 11 11"><rect x=".6" y=".6" width="9.8" height="9.8" rx="1.2" fill="none" stroke="#806af6" stroke-width="1.1"/><rect x=".6" y=".6" width="9.8" height="2" fill="#806af6"/><path d="M5.5 4.2v4.6M3.2 6.5h4.6" stroke="#806af6" stroke-width="1.1"/></svg>
<div class="a" style="left:422px;top:377px;width:1216px;height:80px;background:#ffffff"></div>
<div class="a" style="left:439px;top:410px;width:14px;height:14px;border:1px solid #dcdfe6;border-radius:2px;background:#fff"></div>
<div class="a" style="left:482px;top:407.0px;font-size:14px;line-height:20px;color:#303133;font-weight:normal;">30</div>
<div class="a" style="left:572px;top:385px;width:64px;height:64px;border-radius:4px;background:#e2cec8"><div class="a" style="left:0;top:27px;width:64px;text-align:center;font-size:6px;line-height:10px;color:rgba(255,255,255,0.7)">示例图</div></div>
<div class="a ell" style="left:648px;top:384.5px;width:340px;font-size:14px;line-height:20px;color:#303133">心相印卷纸厨房卷纸 吸油吸水厨房用纸 75节2卷纸巾厨房</div>
<div class="a ell" style="left:648px;top:405px;width:340px;font-size:12px;line-height:16px;color:#909399">吸油吸水厨房用纸</div>
<div class="a" style="left:1012px;top:407.0px;font-size:14px;line-height:20px;color:#303133;font-weight:normal;">16.00</div>
<div class="a" style="left:1162px;top:407.0px;font-size:14px;line-height:20px;color:#303133;font-weight:normal;">3</div>
<div class="a" style="left:1262px;top:407.0px;font-size:14px;line-height:20px;color:#303133;font-weight:normal;">29</div>
<div class="a" style="left:1362px;top:407.0px;font-size:14px;line-height:20px;color:#303133;font-weight:normal;">25</div>
<svg class="a" style="left:1390px;top:411.5px;" width="11" height="11" viewBox="0 0 11 11"><rect x=".6" y=".6" width="9.8" height="9.8" rx="1.2" fill="none" stroke="#806af6" stroke-width="1.1"/><rect x=".6" y=".6" width="9.8" height="2" fill="#806af6"/><path d="M5.5 4.2v4.6M3.2 6.5h4.6" stroke="#806af6" stroke-width="1.1"/></svg>
<div class="a" style="left:422px;top:457px;width:1216px;height:80px;background:#fafafa"></div>
<div class="a" style="left:439px;top:490px;width:14px;height:14px;border:1px solid #dcdfe6;border-radius:2px;background:#fff"></div>
<div class="a" style="left:482px;top:487.0px;font-size:14px;line-height:20px;color:#303133;font-weight:normal;">29</div>
<div class="a" style="left:572px;top:465px;width:64px;height:64px;border-radius:4px;background:#d9d8d7"><div class="a" style="left:0;top:27px;width:64px;text-align:center;font-size:6px;line-height:10px;color:rgba(255,255,255,0.7)">示例图</div></div>
<div class="a ell" style="left:648px;top:464.5px;width:340px;font-size:14px;line-height:20px;color:#303133">水星家纺 床上四件套100%纯棉被套床单枕套床上用品套件</div>
<div class="a ell" style="left:648px;top:485px;width:340px;font-size:12px;line-height:16px;color:#909399">100%纯棉</div>
<div class="a" style="left:1012px;top:487.0px;font-size:14px;line-height:20px;color:#303133;font-weight:normal;">298.00</div>
<div class="a" style="left:1162px;top:487.0px;font-size:14px;line-height:20px;color:#303133;font-weight:normal;">1</div>
<div class="a" style="left:1262px;top:487.0px;font-size:14px;line-height:20px;color:#303133;font-weight:normal;">14</div>
<div class="a" style="left:1362px;top:487.0px;font-size:14px;line-height:20px;color:#303133;font-weight:normal;">17</div>
<svg class="a" style="left:1390px;top:491.5px;" width="11" height="11" viewBox="0 0 11 11"><rect x=".6" y=".6" width="9.8" height="9.8" rx="1.2" fill="none" stroke="#806af6" stroke-width="1.1"/><rect x=".6" y=".6" width="9.8" height="2" fill="#806af6"/><path d="M5.5 4.2v4.6M3.2 6.5h4.6" stroke="#806af6" stroke-width="1.1"/></svg>
<div class="a" style="left:422px;top:537px;width:1216px;height:80px;background:#ffffff"></div>
<div class="a" style="left:439px;top:570px;width:14px;height:14px;border:1px solid #dcdfe6;border-radius:2px;background:#fff"></div>
<div class="a" style="left:482px;top:567.0px;font-size:14px;line-height:20px;color:#303133;font-weight:normal;">26</div>
<div class="a" style="left:572px;top:545px;width:64px;height:64px;border-radius:4px;background:#b9c8d9"><div class="a" style="left:0;top:27px;width:64px;text-align:center;font-size:6px;line-height:10px;color:rgba(255,255,255,0.7)">示例图</div></div>
<div class="a ell" style="left:648px;top:544.5px;width:340px;font-size:14px;line-height:20px;color:#303133">SOO行李箱男万向轮拉杆箱耐磨抗摔26英寸A330旅行箱</div>
<div class="a ell" style="left:648px;top:565px;width:340px;font-size:12px;line-height:16px;color:#909399">万向轮拉杆箱耐磨抗摔</div>
<div class="a" style="left:1012px;top:557.0px;font-size:14px;line-height:20px;color:#303133;font-weight:normal;">168.00</div>
<div class="a" style="left:1012px;top:578px;width:68px;height:20px;border-radius:10px;background:#806af6"></div>
<div class="a" style="left:1020px;top:578.0px;font-size:12px;line-height:20px;color:#fff;font-weight:normal;">多规格</div>
<svg class="a" style="left:1061px;top:586px;" width="9" height="5" viewBox="0 0 9 5"><path d="M.5 .5 4.5 4.5 8.5 .5" fill="none" stroke="#fff" stroke-width="1"/></svg>
<div class="a" style="left:1162px;top:567.0px;font-size:14px;line-height:20px;color:#303133;font-weight:normal;">5</div>
<div class="a" style="left:1262px;top:567.0px;font-size:14px;line-height:20px;color:#303133;font-weight:normal;">230</div>
<div class="a" style="left:1362px;top:567.0px;font-size:14px;line-height:20px;color:#303133;font-weight:normal;">183</div>
<svg class="a" style="left:1398px;top:571.5px;" width="11" height="11" viewBox="0 0 11 11"><rect x=".6" y=".6" width="9.8" height="9.8" rx="1.2" fill="none" stroke="#806af6" stroke-width="1.1"/><rect x=".6" y=".6" width="9.8" height="2" fill="#806af6"/><path d="M5.5 4.2v4.6M3.2 6.5h4.6" stroke="#806af6" stroke-width="1.1"/></svg>
<div class="a" style="left:422px;top:617px;width:1216px;height:80px;background:#fafafa"></div>
<div class="a" style="left:439px;top:650px;width:14px;height:14px;border:1px solid #dcdfe6;border-radius:2px;background:#fff"></div>
<div class="a" style="left:482px;top:647.0px;font-size:14px;line-height:20px;color:#303133;font-weight:normal;">24</div>
<div class="a" style="left:572px;top:625px;width:64px;height:64px;border-radius:4px;background:#a8abae"><div class="a" style="left:0;top:27px;width:64px;text-align:center;font-size:6px;line-height:10px;color:rgba(255,255,255,0.7)">示例图</div></div>
<div class="a ell" style="left:648px;top:624.5px;width:340px;font-size:14px;line-height:20px;color:#303133">【UPF80+】波司登防晒衣2022年夏季防紫外线冰丝防晒服</div>
<div class="a ell" style="left:648px;top:645px;width:340px;font-size:12px;line-height:16px;color:#909399">夏季防紫外线冰丝</div>
<div class="a" style="left:1012px;top:637.0px;font-size:14px;line-height:20px;color:#303133;font-weight:normal;">349.00</div>
<div class="a" style="left:1012px;top:658px;width:68px;height:20px;border-radius:10px;background:#806af6"></div>
<div class="a" style="left:1020px;top:658.0px;font-size:12px;line-height:20px;color:#fff;font-weight:normal;">多规格</div>
<svg class="a" style="left:1061px;top:666px;" width="9" height="5" viewBox="0 0 9 5"><path d="M.5 .5 4.5 4.5 8.5 .5" fill="none" stroke="#fff" stroke-width="1"/></svg>
<div class="a" style="left:1162px;top:647.0px;font-size:14px;line-height:20px;color:#303133;font-weight:normal;">9</div>
<div class="a" style="left:1262px;top:647.0px;font-size:14px;line-height:20px;color:#303133;font-weight:normal;">258</div>
<div class="a" style="left:1362px;top:647.0px;font-size:14px;line-height:20px;color:#303133;font-weight:normal;">142</div>
<svg class="a" style="left:1398px;top:651.5px;" width="11" height="11" viewBox="0 0 11 11"><rect x=".6" y=".6" width="9.8" height="9.8" rx="1.2" fill="none" stroke="#806af6" stroke-width="1.1"/><rect x=".6" y=".6" width="9.8" height="2" fill="#806af6"/><path d="M5.5 4.2v4.6M3.2 6.5h4.6" stroke="#806af6" stroke-width="1.1"/></svg>
<div class="a" style="left:422px;top:697px;width:1216px;height:80px;background:#ffffff"></div>
<div class="a" style="left:439px;top:730px;width:14px;height:14px;border:1px solid #dcdfe6;border-radius:2px;background:#fff"></div>
<div class="a" style="left:482px;top:727.0px;font-size:14px;line-height:20px;color:#303133;font-weight:normal;">22</div>
<div class="a" style="left:572px;top:705px;width:64px;height:64px;border-radius:4px;background:#a0b39c"><div class="a" style="left:0;top:27px;width:64px;text-align:center;font-size:6px;line-height:10px;color:rgba(255,255,255,0.7)">示例图</div></div>
<div class="a ell" style="left:648px;top:704.5px;width:340px;font-size:14px;line-height:20px;color:#303133">猫人男士睡衣男夏季100%纯棉薄款圆领套头短袖套装睡衣</div>
<div class="a ell" style="left:648px;top:725px;width:340px;font-size:12px;line-height:16px;color:#909399">休闲运动可外穿家居服</div>
<div class="a" style="left:1012px;top:717.0px;font-size:14px;line-height:20px;color:#303133;font-weight:normal;">18.99</div>
<div class="a" style="left:1012px;top:738px;width:68px;height:20px;border-radius:10px;background:#806af6"></div>
<div class="a" style="left:1020px;top:738.0px;font-size:12px;line-height:20px;color:#fff;font-weight:normal;">多规格</div>
<svg class="a" style="left:1061px;top:746px;" width="9" height="5" viewBox="0 0 9 5"><path d="M.5 .5 4.5 4.5 8.5 .5" fill="none" stroke="#fff" stroke-width="1"/></svg>
<div class="a" style="left:1162px;top:727.0px;font-size:14px;line-height:20px;color:#303133;font-weight:normal;">13</div>
<div class="a" style="left:1262px;top:727.0px;font-size:14px;line-height:20px;color:#303133;font-weight:normal;">68</div>
<div class="a" style="left:1362px;top:727.0px;font-size:14px;line-height:20px;color:#303133;font-weight:normal;">55</div>
<svg class="a" style="left:1390px;top:731.5px;" width="11" height="11" viewBox="0 0 11 11"><rect x=".6" y=".6" width="9.8" height="9.8" rx="1.2" fill="none" stroke="#806af6" stroke-width="1.1"/><rect x=".6" y=".6" width="9.8" height="2" fill="#806af6"/><path d="M5.5 4.2v4.6M3.2 6.5h4.6" stroke="#806af6" stroke-width="1.1"/></svg>
<div class="a" style="left:422px;top:777px;width:1216px;height:80px;background:#fafafa"></div>
<div class="a" style="left:439px;top:810px;width:14px;height:14px;border:1px solid #dcdfe6;border-radius:2px;background:#fff"></div>
<div class="a" style="left:482px;top:807.0px;font-size:14px;line-height:20px;color:#303133;font-weight:normal;">21</div>
<div class="a" style="left:572px;top:785px;width:64px;height:64px;border-radius:4px;background:#7d93ad"><div class="a" style="left:0;top:27px;width:64px;text-align:center;font-size:6px;line-height:10px;color:rgba(255,255,255,0.7)">示例图</div></div>
<div class="a ell" style="left:648px;top:784.5px;width:340px;font-size:14px;line-height:20px;color:#303133">CACUSS B0520帽子男百搭潮流棒球帽女休闲户外鸭舌帽</div>
<div class="a ell" style="left:648px;top:805px;width:340px;font-size:12px;line-height:16px;color:#909399">百搭潮流棒球帽</div>
<div class="a" style="left:1012px;top:797.0px;font-size:14px;line-height:20px;color:#303133;font-weight:normal;">69.00</div>
<div class="a" style="left:1012px;top:818px;width:68px;height:20px;border-radius:10px;background:#806af6"></div>
<div class="a" style="left:1020px;top:818.0px;font-size:12px;line-height:20px;color:#fff;font-weight:normal;">多规格</div>
<svg class="a" style="left:1061px;top:826px;" width="9" height="5" viewBox="0 0 9 5"><path d="M.5 .5 4.5 4.5 8.5 .5" fill="none" stroke="#fff" stroke-width="1"/></svg>
<div class="a" style="left:1162px;top:807.0px;font-size:14px;line-height:20px;color:#303133;font-weight:normal;">3</div>
<div class="a" style="left:1262px;top:807.0px;font-size:14px;line-height:20px;color:#303133;font-weight:normal;">20</div>
<div class="a" style="left:1362px;top:807.0px;font-size:14px;line-height:20px;color:#303133;font-weight:normal;">33</div>
<svg class="a" style="left:1390px;top:811.5px;" width="11" height="11" viewBox="0 0 11 11"><rect x=".6" y=".6" width="9.8" height="9.8" rx="1.2" fill="none" stroke="#806af6" stroke-width="1.1"/><rect x=".6" y=".6" width="9.8" height="2" fill="#806af6"/><path d="M5.5 4.2v4.6M3.2 6.5h4.6" stroke="#806af6" stroke-width="1.1"/></svg>
<div class="a" style="left:422px;top:857px;width:1216px;height:80px;background:#ffffff"></div>
<div class="a" style="left:439px;top:890px;width:14px;height:14px;border:1px solid #dcdfe6;border-radius:2px;background:#fff"></div>
<div class="a" style="left:482px;top:887.0px;font-size:14px;line-height:20px;color:#303133;font-weight:normal;">19</div>
<div class="a" style="left:572px;top:865px;width:64px;height:64px;border-radius:4px;background:#d9caa9"><div class="a" style="left:0;top:27px;width:64px;text-align:center;font-size:6px;line-height:10px;color:rgba(255,255,255,0.7)">示例图</div></div>
<div class="a ell" style="left:648px;top:864.5px;width:340px;font-size:14px;line-height:20px;color:#303133">Apple iPhone 13 Pro Max (A2644) 256GB 苍岭绿色 支持移动联通</div>
<div class="a ell" style="left:648px;top:885px;width:340px;font-size:12px;line-height:16px;color:#909399">Apple iPhone 13 Pro Max (A2644) 256GB 苍岭绿色 支持移动联通电信5G</div>
<div class="a" style="left:1012px;top:887.0px;font-size:14px;line-height:20px;color:#303133;font-weight:normal;">7980.00</div>
<div class="a" style="left:1162px;top:887.0px;font-size:14px;line-height:20px;color:#303133;font-weight:normal;">1</div>
<div class="a" style="left:1262px;top:887.0px;font-size:14px;line-height:20px;color:#303133;font-weight:normal;">56</div>
<div class="a" style="left:1362px;top:887.0px;font-size:14px;line-height:20px;color:#303133;font-weight:normal;">19</div>
<svg class="a" style="left:1390px;top:891.5px;" width="11" height="11" viewBox="0 0 11 11"><rect x=".6" y=".6" width="9.8" height="9.8" rx="1.2" fill="none" stroke="#806af6" stroke-width="1.1"/><rect x=".6" y=".6" width="9.8" height="2" fill="#806af6"/><path d="M5.5 4.2v4.6M3.2 6.5h4.6" stroke="#806af6" stroke-width="1.1"/></svg>
<div class="a" style="left:422px;top:937px;width:1216px;height:80px;background:#fafafa"></div>
<div class="a" style="left:439px;top:970px;width:14px;height:14px;border:1px solid #dcdfe6;border-radius:2px;background:#fff"></div>
<div class="a" style="left:482px;top:967.0px;font-size:14px;line-height:20px;color:#303133;font-weight:normal;">18</div>
<div class="a" style="left:572px;top:945px;width:64px;height:64px;border-radius:4px;background:#e8e1d6"><div class="a" style="left:0;top:27px;width:64px;text-align:center;font-size:6px;line-height:10px;color:rgba(255,255,255,0.7)">示例图</div></div>
<div class="a ell" style="left:648px;top:944.5px;width:340px;font-size:14px;line-height:20px;color:#303133">Apple Watch Series 7 智能手表GPS款41 毫米星光色铝金属</div>
<div class="a ell" style="left:648px;top:965px;width:340px;font-size:12px;line-height:16px;color:#909399">智能手表GPS</div>
<div class="a" style="left:1012px;top:957.0px;font-size:14px;line-height:20px;color:#303133;font-weight:normal;">2999.00</div>
<div class="a" style="left:1012px;top:978px;width:68px;height:20px;border-radius:10px;background:#806af6"></div>
<div class="a" style="left:1020px;top:978.0px;font-size:12px;line-height:20px;color:#fff;font-weight:normal;">多规格</div>
<svg class="a" style="left:1061px;top:986px;" width="9" height="5" viewBox="0 0 9 5"><path d="M.5 .5 4.5 4.5 8.5 .5" fill="none" stroke="#fff" stroke-width="1"/></svg>
<div class="a" style="left:1162px;top:967.0px;font-size:14px;line-height:20px;color:#303133;font-weight:normal;">0</div>
<div class="a" style="left:1262px;top:967.0px;font-size:14px;line-height:20px;color:#303133;font-weight:normal;">71</div>
<div class="a" style="left:1362px;top:967.0px;font-size:14px;line-height:20px;color:#303133;font-weight:normal;">59</div>
<svg class="a" style="left:1390px;top:971.5px;" width="11" height="11" viewBox="0 0 11 11"><rect x=".6" y=".6" width="9.8" height="9.8" rx="1.2" fill="none" stroke="#806af6" stroke-width="1.1"/><rect x=".6" y=".6" width="9.8" height="2" fill="#806af6"/><path d="M5.5 4.2v4.6M3.2 6.5h4.6" stroke="#806af6" stroke-width="1.1"/></svg>
<div class="a" style="left:1397px;top:176px;width:241px;height:841px;box-shadow:-6px 0 8px -4px rgba(0,0,0,0.12);"></div>
<div class="a" style="left:1397px;top:176px;width:241px;height:41px;background:#f5f5f5"></div>
<div class="a" style="left:1410px;top:186.5px;font-size:14px;line-height:20px;color:#606266;font-weight:normal;">操作</div>
<div class="a" style="left:1397px;top:217px;width:241px;height:80px;background:#ffffff"></div>
<div class="a" style="left:1413px;top:245px;width:74px;height:24px;background:#f0f9eb;border:1px solid #e1f3d8;border-radius:4px"></div>
<div class="a" style="left:1423px;top:248.0px;font-size:12px;line-height:20px;color:#67c23a;font-weight:normal;">上架中</div>
<svg class="a" style="left:1466px;top:256px;" width="9" height="5" viewBox="0 0 9 5"><path d="M.5 .5 4.5 4.5 8.5 .5" fill="none" stroke="#67c23a" stroke-width="1"/></svg>
<div class="a" style="left:1493px;top:247.5px;font-size:14px;line-height:20px;color:#806af6;font-weight:normal;">编辑</div>
<div class="a" style="left:1539px;top:247.5px;font-size:14px;line-height:20px;color:#806af6;font-weight:normal;">复制</div>
<div class="a" style="left:1584px;top:247.5px;font-size:14px;line-height:20px;color:#f56c6c;font-weight:normal;">删除</div>
<div class="a" style="left:1397px;top:297px;width:241px;height:80px;background:#fafafa"></div>
<div class="a" style="left:1413px;top:325px;width:74px;height:24px;background:#f0f9eb;border:1px solid #e1f3d8;border-radius:4px"></div>
<div class="a" style="left:1423px;top:328.0px;font-size:12px;line-height:20px;color:#67c23a;font-weight:normal;">上架中</div>
<svg class="a" style="left:1466px;top:336px;" width="9" height="5" viewBox="0 0 9 5"><path d="M.5 .5 4.5 4.5 8.5 .5" fill="none" stroke="#67c23a" stroke-width="1"/></svg>
<div class="a" style="left:1493px;top:327.5px;font-size:14px;line-height:20px;color:#806af6;font-weight:normal;">编辑</div>
<div class="a" style="left:1539px;top:327.5px;font-size:14px;line-height:20px;color:#806af6;font-weight:normal;">复制</div>
<div class="a" style="left:1584px;top:327.5px;font-size:14px;line-height:20px;color:#f56c6c;font-weight:normal;">删除</div>
<div class="a" style="left:1397px;top:377px;width:241px;height:80px;background:#ffffff"></div>
<div class="a" style="left:1413px;top:405px;width:74px;height:24px;background:#f0f9eb;border:1px solid #e1f3d8;border-radius:4px"></div>
<div class="a" style="left:1423px;top:408.0px;font-size:12px;line-height:20px;color:#67c23a;font-weight:normal;">上架中</div>
<svg class="a" style="left:1466px;top:416px;" width="9" height="5" viewBox="0 0 9 5"><path d="M.5 .5 4.5 4.5 8.5 .5" fill="none" stroke="#67c23a" stroke-width="1"/></svg>
<div class="a" style="left:1493px;top:407.5px;font-size:14px;line-height:20px;color:#806af6;font-weight:normal;">编辑</div>
<div class="a" style="left:1539px;top:407.5px;font-size:14px;line-height:20px;color:#806af6;font-weight:normal;">复制</div>
<div class="a" style="left:1584px;top:407.5px;font-size:14px;line-height:20px;color:#f56c6c;font-weight:normal;">删除</div>
<div class="a" style="left:1397px;top:457px;width:241px;height:80px;background:#fafafa"></div>
<div class="a" style="left:1413px;top:485px;width:74px;height:24px;background:#fef0f0;border:1px solid #fde2e2;border-radius:4px"></div>
<div class="a" style="left:1423px;top:488.0px;font-size:12px;line-height:20px;color:#f56c6c;font-weight:normal;">已下架</div>
<svg class="a" style="left:1466px;top:496px;" width="9" height="5" viewBox="0 0 9 5"><path d="M.5 .5 4.5 4.5 8.5 .5" fill="none" stroke="#f56c6c" stroke-width="1"/></svg>
<div class="a" style="left:1493px;top:487.5px;font-size:14px;line-height:20px;color:#806af6;font-weight:normal;">编辑</div>
<div class="a" style="left:1539px;top:487.5px;font-size:14px;line-height:20px;color:#806af6;font-weight:normal;">复制</div>
<div class="a" style="left:1584px;top:487.5px;font-size:14px;line-height:20px;color:#f56c6c;font-weight:normal;">删除</div>
<div class="a" style="left:1397px;top:537px;width:241px;height:80px;background:#ffffff"></div>
<div class="a" style="left:1413px;top:565px;width:74px;height:24px;background:#f0f9eb;border:1px solid #e1f3d8;border-radius:4px"></div>
<div class="a" style="left:1423px;top:568.0px;font-size:12px;line-height:20px;color:#67c23a;font-weight:normal;">上架中</div>
<svg class="a" style="left:1466px;top:576px;" width="9" height="5" viewBox="0 0 9 5"><path d="M.5 .5 4.5 4.5 8.5 .5" fill="none" stroke="#67c23a" stroke-width="1"/></svg>
<div class="a" style="left:1493px;top:567.5px;font-size:14px;line-height:20px;color:#806af6;font-weight:normal;">编辑</div>
<div class="a" style="left:1539px;top:567.5px;font-size:14px;line-height:20px;color:#806af6;font-weight:normal;">复制</div>
<div class="a" style="left:1584px;top:567.5px;font-size:14px;line-height:20px;color:#f56c6c;font-weight:normal;">删除</div>
<div class="a" style="left:1397px;top:617px;width:241px;height:80px;background:#fafafa"></div>
<div class="a" style="left:1413px;top:645px;width:74px;height:24px;background:#f0f9eb;border:1px solid #e1f3d8;border-radius:4px"></div>
<div class="a" style="left:1423px;top:648.0px;font-size:12px;line-height:20px;color:#67c23a;font-weight:normal;">上架中</div>
<svg class="a" style="left:1466px;top:656px;" width="9" height="5" viewBox="0 0 9 5"><path d="M.5 .5 4.5 4.5 8.5 .5" fill="none" stroke="#67c23a" stroke-width="1"/></svg>
<div class="a" style="left:1493px;top:647.5px;font-size:14px;line-height:20px;color:#806af6;font-weight:normal;">编辑</div>
<div class="a" style="left:1539px;top:647.5px;font-size:14px;line-height:20px;color:#806af6;font-weight:normal;">复制</div>
<div class="a" style="left:1584px;top:647.5px;font-size:14px;line-height:20px;color:#f56c6c;font-weight:normal;">删除</div>
<div class="a" style="left:1397px;top:697px;width:241px;height:80px;background:#ffffff"></div>
<div class="a" style="left:1413px;top:725px;width:74px;height:24px;background:#f0f9eb;border:1px solid #e1f3d8;border-radius:4px"></div>
<div class="a" style="left:1423px;top:728.0px;font-size:12px;line-height:20px;color:#67c23a;font-weight:normal;">上架中</div>
<svg class="a" style="left:1466px;top:736px;" width="9" height="5" viewBox="0 0 9 5"><path d="M.5 .5 4.5 4.5 8.5 .5" fill="none" stroke="#67c23a" stroke-width="1"/></svg>
<div class="a" style="left:1493px;top:727.5px;font-size:14px;line-height:20px;color:#806af6;font-weight:normal;">编辑</div>
<div class="a" style="left:1539px;top:727.5px;font-size:14px;line-height:20px;color:#806af6;font-weight:normal;">复制</div>
<div class="a" style="left:1584px;top:727.5px;font-size:14px;line-height:20px;color:#f56c6c;font-weight:normal;">删除</div>
<div class="a" style="left:1397px;top:777px;width:241px;height:80px;background:#fafafa"></div>
<div class="a" style="left:1413px;top:805px;width:74px;height:24px;background:#f0f9eb;border:1px solid #e1f3d8;border-radius:4px"></div>
<div class="a" style="left:1423px;top:808.0px;font-size:12px;line-height:20px;color:#67c23a;font-weight:normal;">上架中</div>
<svg class="a" style="left:1466px;top:816px;" width="9" height="5" viewBox="0 0 9 5"><path d="M.5 .5 4.5 4.5 8.5 .5" fill="none" stroke="#67c23a" stroke-width="1"/></svg>
<div class="a" style="left:1493px;top:807.5px;font-size:14px;line-height:20px;color:#806af6;font-weight:normal;">编辑</div>
<div class="a" style="left:1539px;top:807.5px;font-size:14px;line-height:20px;color:#806af6;font-weight:normal;">复制</div>
<div class="a" style="left:1584px;top:807.5px;font-size:14px;line-height:20px;color:#f56c6c;font-weight:normal;">删除</div>
<div class="a" style="left:1397px;top:857px;width:241px;height:80px;background:#ffffff"></div>
<div class="a" style="left:1413px;top:885px;width:74px;height:24px;background:#f0f9eb;border:1px solid #e1f3d8;border-radius:4px"></div>
<div class="a" style="left:1423px;top:888.0px;font-size:12px;line-height:20px;color:#67c23a;font-weight:normal;">上架中</div>
<svg class="a" style="left:1466px;top:896px;" width="9" height="5" viewBox="0 0 9 5"><path d="M.5 .5 4.5 4.5 8.5 .5" fill="none" stroke="#67c23a" stroke-width="1"/></svg>
<div class="a" style="left:1493px;top:887.5px;font-size:14px;line-height:20px;color:#806af6;font-weight:normal;">编辑</div>
<div class="a" style="left:1539px;top:887.5px;font-size:14px;line-height:20px;color:#806af6;font-weight:normal;">复制</div>
<div class="a" style="left:1584px;top:887.5px;font-size:14px;line-height:20px;color:#f56c6c;font-weight:normal;">删除</div>
<div class="a" style="left:1397px;top:937px;width:241px;height:80px;background:#fafafa"></div>
<div class="a" style="left:1413px;top:965px;width:74px;height:24px;background:#f0f9eb;border:1px solid #e1f3d8;border-radius:4px"></div>
<div class="a" style="left:1423px;top:968.0px;font-size:12px;line-height:20px;color:#67c23a;font-weight:normal;">上架中</div>
<svg class="a" style="left:1466px;top:976px;" width="9" height="5" viewBox="0 0 9 5"><path d="M.5 .5 4.5 4.5 8.5 .5" fill="none" stroke="#67c23a" stroke-width="1"/></svg>
<div class="a" style="left:1493px;top:967.5px;font-size:14px;line-height:20px;color:#806af6;font-weight:normal;">编辑</div>
<div class="a" style="left:1539px;top:967.5px;font-size:14px;line-height:20px;color:#806af6;font-weight:normal;">复制</div>
<div class="a" style="left:1584px;top:967.5px;font-size:14px;line-height:20px;color:#f56c6c;font-weight:normal;">删除</div>
<div class="a" style="left:241px;top:1215px;width:1417px;height:56px;background:#fff;border-radius:6px;box-shadow:0 -4px 16px rgba(0,0,0,0.07),0 1px 2px rgba(0,0,0,0.06)"></div>
<div class="a" style="left:261px;top:1233.0px;font-size:14px;line-height:20px;color:#303133;font-weight:normal;">已选择 0 项</div>
<div class="a" style="left:346px;top:1227px;width:60px;height:32px;border-radius:4px;background:#fab6b6;color:#fff;text-align:center;font-size:14px;line-height:32px">删除</div>
<div class="a" style="left:418px;top:1227px;width:60px;height:32px;border-radius:4px;background:#b3e19d;color:#fff;text-align:center;font-size:14px;line-height:32px">上架</div>
<div class="a" style="left:490px;top:1227px;width:60px;height:32px;border-radius:4px;background:#fab6b6;color:#fff;text-align:center;font-size:14px;line-height:32px">下架</div>
<div class="a" style="left:562px;top:1227px;width:60px;height:32px;border-radius:4px;background:#c8c9cc;color:#fff;text-align:center;font-size:14px;line-height:32px">隐藏</div>
<div class="a" style="left:1151px;top:1233.0px;font-size:14px;line-height:20px;color:#606266;font-weight:normal;">共 23 条</div>
<div class="a" style="left:1220px;top:1227px;width:127px;height:32px;border:1px solid #dcdfe6;border-radius:4px;background:#fff"></div>
<div class="a" style="left:1248px;top:1233.0px;font-size:14px;line-height:20px;color:#606266;font-weight:normal;">10条/页</div>
<svg class="a" style="left:1324px;top:1240px;" width="11" height="6" viewBox="0 0 11 6"><path d="M.5 .5 5.5 5.5 10.5 .5" fill="none" stroke="#c0c4cc" stroke-width="1.1"/></svg>
<svg class="a" style="left:1376px;top:1238px;" width="6" height="10" viewBox="0 0 6 10"><path d="M5 .5.8 5 5 9.5" fill="none" stroke="#c0c4cc" stroke-width="1.1"/></svg>
<div class="a" style="left:1408px;top:1233.0px;font-size:14px;line-height:20px;color:#806af6;font-weight:bold;width:8px;text-align:center">1</div>
<div class="a" style="left:1440px;top:1233.0px;font-size:14px;line-height:20px;color:#303133;font-weight:normal;width:8px;text-align:center">2</div>
<div class="a" style="left:1472px;top:1233.0px;font-size:14px;line-height:20px;color:#303133;font-weight:normal;width:8px;text-align:center">3</div>
<svg class="a" style="left:1505px;top:1238px;" width="6" height="10" viewBox="0 0 6 10"><path d="M1 .5 5.2 5 1 9.5" fill="none" stroke="#303133" stroke-width="1.1"/></svg>
<div class="a" style="left:1540px;top:1233.0px;font-size:14px;line-height:20px;color:#606266;font-weight:normal;">前往</div>
<div class="a" style="left:1568px;top:1231px;width:56px;height:24px;border:1px solid #dcdfe6;border-radius:4px;background:#fff"></div>
<div class="a" style="left:1592px;top:1233.0px;font-size:14px;line-height:20px;color:#606266;font-weight:normal;">1</div>
<div class="a" style="left:1613px;top:1176px;width:40px;height:40px;border-radius:50%;background:#fcfcfd;box-shadow:0 2px 12px rgba(0,0,0,0.10)"></div>
<svg class="a" style="left:1626px;top:1187px;" width="14" height="17" viewBox="0 0 14 17"><path d="M7 1C4 1 2.4 3.3 2.4 6.2V9.3C2.4 10.4 1 11 1 12.3 1 13 1.6 13.5 2.4 13.5H11.6C12.4 13.5 13 13 13 12.3 13 11 11.6 10.4 11.6 9.3V6.2C11.6 3.3 10 1 7 1ZM5 14.4H9C8.7 15.5 8 16.2 7 16.2S5.3 15.5 5 14.4Z" fill="#806af6"/></svg>
<div class="a" style="left:1613px;top:1226px;width:40px;height:40px;border-radius:50%;background:#fcfcfd;box-shadow:0 2px 12px rgba(0,0,0,0.10)"></div>
<svg class="a" style="left:1625px;top:1237px;" width="17" height="17" viewBox="0 0 17 17"><circle cx="8.5" cy="8.2" r="7.8" fill="#806af6"/><path d="M1.5 12 .5 16.5 5 15z" fill="#806af6"/><circle cx="4.8" cy="8.2" r="1" fill="#fff"/><circle cx="8.5" cy="8.2" r="1" fill="#fff"/><circle cx="12.2" cy="8.2" r="1" fill="#fff"/></svg>
</body></html>
